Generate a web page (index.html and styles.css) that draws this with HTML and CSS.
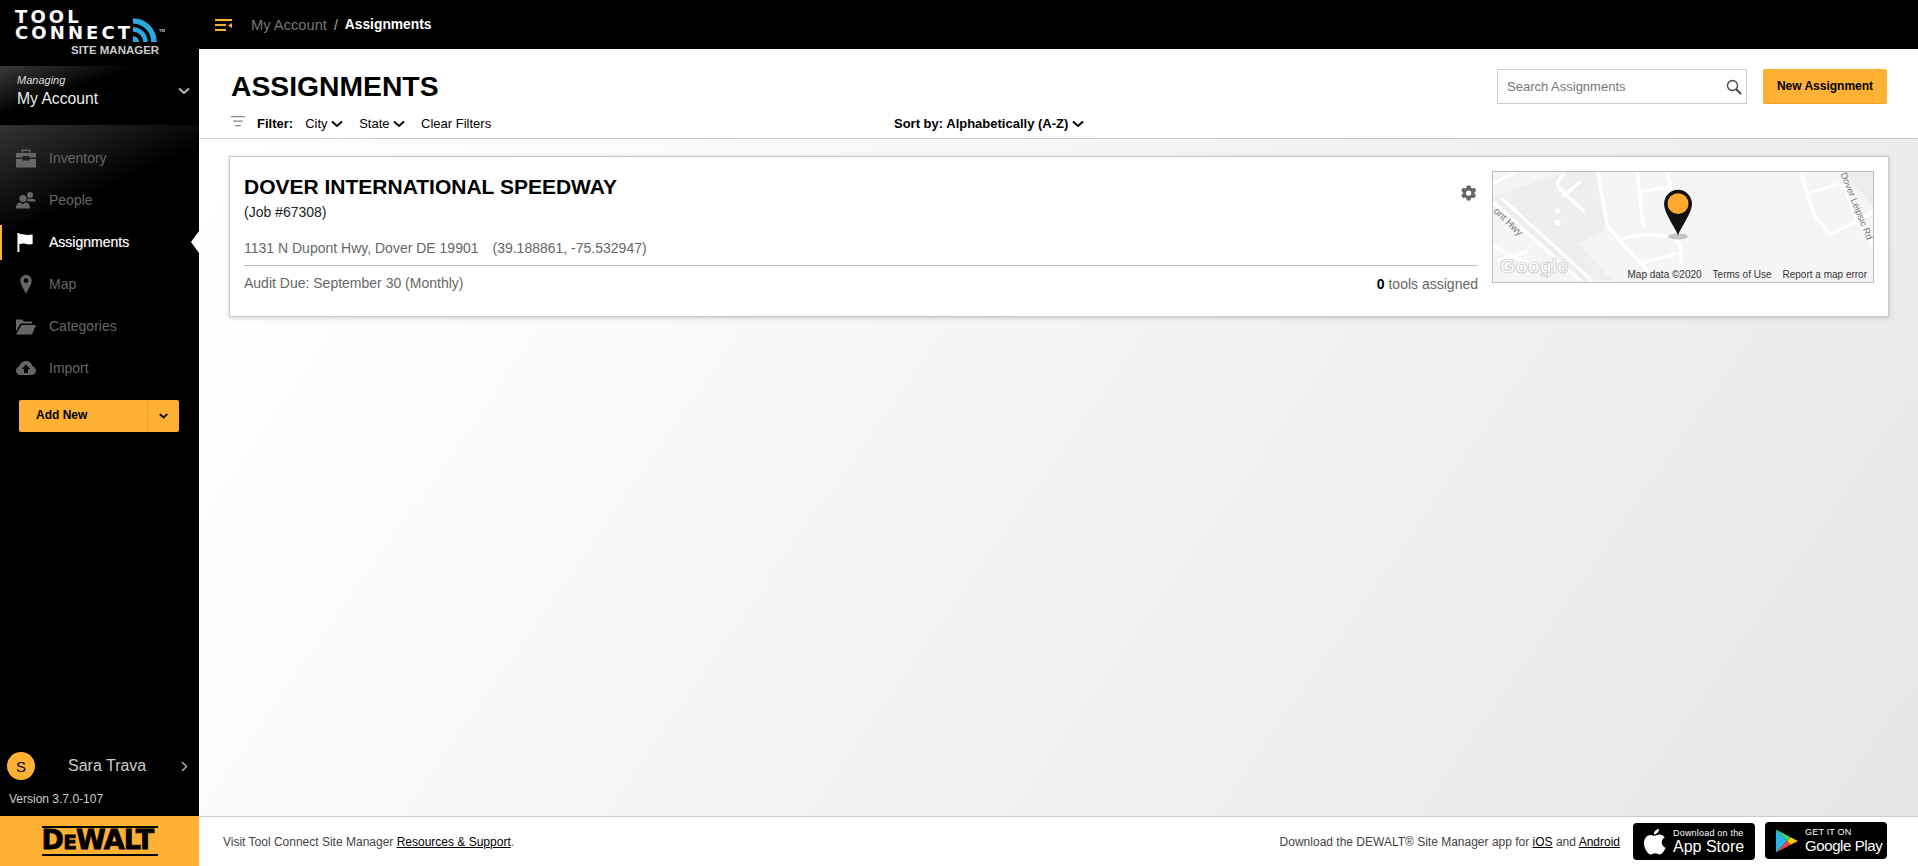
FILE: index.html
```html
<!DOCTYPE html>
<html lang="en">
<head>
    <meta charset="UTF-8"/>
    <title>Assignments</title>
    <link rel="stylesheet" href="styles.css">
</head>
<body>
    <aside class="sidebar">
        <div class="brand">
            <div class="brand-word">TOOL</div>
            <div class="brand-word">CONNECT</div>
            <svg class="brand-wifi" viewBox="0 0 26 24">
                <path d="M0 3A21 21 0 0 1 21 24" fill="none" stroke="#29a9df" stroke-width="5.500"/>
                <path d="M0 11.500A12.500 12.500 0 0 1 12.500 24" fill="none" stroke="#29a9df" stroke-width="4.500"/>
                <path d="M0 24v-6a6 6 0 0 1 6 6z" fill="#29a9df"/>
            </svg>
            <span class="brand-tm">TM</span>
            <div class="brand-sub">SITE MANAGER</div>
        </div>

        <div class="managing">
            <div>
                <em>Managing</em>
                <div class="managing-name">My Account</div>
            </div>
            <svg class="chev" width="12" height="8" viewBox="0 0 12 8"><path d="M1 1.500l5 4.500 5-4.500" fill="none" stroke="#bbb" stroke-width="2"/></svg>
        </div>

        <nav class="nav">
            <a class="nav-item">
                <svg class="nav-icon" viewBox="0 0 20 18"><path d="M5.500 0h9v3H13V1.500H7V3H5.500zM0 3.500h20V8h-6.500V6.500h-7V8H0zM0 9.500h6.500V11h7V9.500H20V18H0z"/></svg>
                Inventory
            </a>
            <a class="nav-item">
                <svg class="nav-icon" viewBox="0 0 20 18"><circle cx="7" cy="7" r="3.600"/><path d="M0 17c0-4 2-6 4-6l3 1.500L10 11c2 0 4 2 4 6z"/><circle cx="14" cy="3.500" r="3"/><path d="M10.500 9c1-1.500 2-2 2.500-2l1 .8 1.500-.8c2 0 4 1 4.500 3h-7z"/></svg>
                People
            </a>
            <a class="nav-item active">
                <svg class="nav-icon" viewBox="0 0 20 20"><path d="M1 0h2v20H1zM3 1.500c3-1 5 .5 8 .5l6-.5v10c-3 1-5 .2-8-.3-2-.3-4 0-6 .6z"/></svg>
                Assignments
            </a>
            <a class="nav-item">
                <svg class="nav-icon" viewBox="0 0 20 20"><path fill-rule="evenodd" d="M10 0c3.500 0 6 2.600 6 6 0 4-4 9-6 14-2-5-6-10-6-14 0-3.400 2.500-6 6-6zm0 3.500a2.500 2.500 0 100 5 2.500 2.500 0 000-5z"/></svg>
                Map
            </a>
            <a class="nav-item">
                <svg class="nav-icon" viewBox="0 0 20 16"><path d="M0 1h6l2 2h8v2H4.500L0 13zM5.500 6.500H20L16 16H0z"/></svg>
                Categories
            </a>
            <a class="nav-item">
                <svg class="nav-icon" viewBox="0 0 20 15"><path fill-rule="evenodd" d="M4.500 14C2 14 0 12.200 0 9.700c0-2 1.300-3.700 3.200-4.200C4 2.400 6.700 0 10 0c3.200 0 5.800 2.200 6.600 5.300 2 .5 3.400 2.300 3.400 4.400 0 2.500-2 4.300-4.500 4.300zM10 3.500L5.500 8H8v4h4V8h2.500z"/></svg>
                Import
            </a>
        </nav>

        <div class="add-new">
            <span class="add-new-label">Add New</span>
            <span class="add-new-arrow">
                <svg width="9" height="6" viewBox="0 0 12 8"><path d="M1 1.500l5 4.500 5-4.500" fill="none" stroke="#000" stroke-width="2.500"/></svg>
            </span>
        </div>

        <div class="side-spacer"></div>

        <div class="user">
            <span class="avatar">S</span>
            <span class="user-name">Sara Trava</span>
            <svg width="7" height="11" viewBox="0 0 7 11"><path d="M1 1l4.500 4.500L1 10" fill="none" stroke="#aaa" stroke-width="1.500"/></svg>
        </div>
        <div class="version">Version 3.7.0-107</div>
    </aside>

    <header class="topbar">
        <svg class="menu-icon" width="17" height="12" viewBox="0 0 17 12"><path d="M0 0h17v2H0zM0 5h11v2H0zM0 10h11v2H0zM17 4v5l-4-2.500z" fill="#ffb133"/></svg>
        <span class="crumb">My Account</span>
        <span class="crumb-sep">/</span>
        <strong class="crumb-current">Assignments</strong>
    </header>

    <main class="main">
        <section class="page-head">
            <div class="page-head-top">
                <h1>ASSIGNMENTS</h1>
                <div class="page-actions">
                    <div class="search">
                        <span>Search Assignments</span>
                        <svg width="16" height="16" viewBox="0 0 16 16"><circle cx="6.500" cy="6.500" r="5" fill="none" stroke="#444" stroke-width="1.300"/><path d="M10 10l5 5" stroke="#444" stroke-width="2"/></svg>
                    </div>
                    <button class="btn-new">New Assignment</button>
                </div>
            </div>
            <div class="filters">
                <div class="filter-left">
                    <svg class="filter-icon" width="14" height="11" viewBox="0 0 14 11"><path d="M0 0h14v1.300H0zM2 4.500h10v1.300H2zM4 9h6v1.300H4z" fill="#888"/></svg>
                    <b>Filter:</b>
                    <span class="filter-opt">City <svg width="12" height="8" viewBox="0 0 12 8"><path d="M1 1.500l5 4.500 5-4.500" fill="none" stroke="#000" stroke-width="2"/></svg></span>
                    <span class="filter-opt">State <svg width="12" height="8" viewBox="0 0 12 8"><path d="M1 1.500l5 4.500 5-4.500" fill="none" stroke="#000" stroke-width="2"/></svg></span>
                    <span class="filter-opt">Clear Filters</span>
                </div>
                <div class="sort">Sort by: Alphabetically (A-Z) <svg width="12" height="8" viewBox="0 0 12 8"><path d="M1 1.500l5 4.500 5-4.500" fill="none" stroke="#000" stroke-width="2"/></svg></div>
            </div>
        </section>

        <article class="card">
            <div class="card-info">
                <div class="card-head">
                    <div>
                        <h2>DOVER INTERNATIONAL SPEEDWAY</h2>
                        <div class="job">(Job #67308)</div>
                    </div>
                    <svg class="gear" width="18" height="18" viewBox="0 0 24 24"><path fill="#666" d="M19.400 13c.1-.3.100-.7.100-1s0-.7-.1-1l2.100-1.600c.2-.2.200-.4.100-.6l-2-3.500c-.1-.2-.4-.3-.6-.2l-2.500 1c-.5-.4-1.100-.7-1.700-1L14 2.400c0-.2-.2-.4-.5-.4h-4c-.2 0-.4.200-.5.400l-.4 2.700c-.6.300-1.200.6-1.700 1l-2.500-1c-.2-.1-.5 0-.6.200l-2 3.500c-.1.200-.1.400.1.600L4 11c0 .3-.1.700-.1 1s0 .7.100 1l-2.100 1.600c-.2.200-.2.400-.1.600l2 3.500c.1.200.4.300.6.200l2.500-1c.5.400 1.100.7 1.700 1l.4 2.700c0 .2.200.4.500.4h4c.2 0 .4-.2.500-.4l.4-2.700c.6-.3 1.200-.6 1.700-1l2.500 1c.2.100.5 0 .6-.2l2-3.500c.1-.2.100-.4-.1-.6zM11.500 15.500a3.500 3.500 0 110-7 3.500 3.500 0 010 7z"/></svg>
                </div>
                <div class="address"><span>1131 N Dupont Hwy, Dover DE 19901</span><span>(39.188861, -75.532947)</span></div>
                <div class="card-foot">
                    <span>Audit Due: September 30 (Monthly)</span>
                    <span class="tools"><b>0</b> tools assigned</span>
                </div>
            </div>
            <div class="map">
                <svg class="map-art" viewBox="0 0 382 111" preserveAspectRatio="none">
                    <rect width="382" height="111" fill="#f5f5f5"/>
                    <path d="M0 25L70 0h36l8 58-28 14 34 38H92L0 28z" fill="#eeeeee"/>
                    <path d="M352 0h30v33z" fill="#ececec"/>
                    <g fill="none" stroke="#fff" stroke-width="3.500">
                        <path d="M0 12L22 0"/>
                        <path d="M0 30l88 80M8 26l92 84" stroke-width="3"/>
                        <path d="M105 0l10 55 45 50M145 0l6 55M175 0l5 20M148 20l30-5"/>
                        <path d="M130 68c15-6 50-8 58 4l3 38M150 92l35-10"/>
                        <path d="M72 2c-10 8-8 12-2 18l22 20M88 10L70 24"/>
                        <path d="M310 0l8 30 6 15 15 18 30-15 13-8M316 22l32-10"/>
                        <path d="M350 0c5 20 10 35 16 50l16 24"/>
                        <path d="M0 75l40 20M5 90l30-10"/>
                    </g>
                    <circle cx="65" cy="39" r="2.500" fill="#fff"/>
                    <circle cx="65" cy="51" r="3" fill="#fff"/>
                    <text class="map-road" x="0" y="40" transform="rotate(44 0 40)">ont Hwy</text>
                    <text class="map-road map-road-small" x="349" y="2" transform="rotate(68 349 2)">Dover Leipsic Rd</text>
                    <text class="map-logo" x="7" y="102">Google</text>
                    <ellipse cx="186" cy="65" rx="10" ry="3" fill="#c4c4c4"/>
                    <path d="M186 64c-2-7-14-22-14-32a14 14 0 0128 0c0 10-12 25-14 32z" fill="#111"/>
                    <circle cx="186" cy="32" r="10.500" fill="#ffa92e"/>
                </svg>
                <div class="map-credits">
                    <span>Map data ©2020</span>
                    <span>Terms of Use</span>
                    <span>Report a map error</span>
                </div>
            </div>
        </article>
    </main>

    <div class="dewalt">
        <div class="dewalt-logo">D<small>E</small>WALT</div>
    </div>

    <footer class="footer">
        <div>Visit Tool Connect Site Manager <a>Resources &amp; Support</a>.</div>
        <div class="footer-right">
            <span class="footer-app">Download the DEWALT® Site Manager app for <a>iOS</a> and <a>Android</a></span>
            <div class="badge">
                <svg width="22" height="26" viewBox="0 0 22 26"><path fill="#fff" d="M15 0c.2 2.800-2.300 5.500-5 5.300C9.700 2.700 12.300.200 15 0zM10.500 6.800c1.200 0 2.600-1.300 5-1.300 1.700 0 3.900.9 5.200 2.900-4.300 2.500-3.600 8.600.9 10.300-1.100 2.700-3.500 6.800-5.900 6.800-1.800 0-2.500-1.200-4.500-1.200s-2.800 1.200-4.400 1.200C3.800 25.500 0 19.500 0 14.300 0 9 3.200 5.900 6.500 5.900c1.600 0 3 .9 4 .9z"/></svg>
                <div class="badge-text">
                    <small>Download on the</small>
                    <span>App Store</span>
                </div>
            </div>
            <div class="badge badge-google">
                <svg width="22" height="26" viewBox="0 0 24 27"><path fill="#27b6e9" d="M0 1v25l12-12.500z"/><path fill="#3fd07a" d="M0 1l16 8.500-4 4z"/><path fill="#f0433f" d="M0 26l16-8.500-4-4z"/><path fill="#fec30b" d="M16 9.500l8 4-8 4-4-4z"/></svg>
                <div class="badge-text">
                    <small>GET IT ON</small>
                    <span class="badge-play">Google Play</span>
                </div>
            </div>
        </div>
    </footer>
</body>
</html>
```

FILE: styles.css
```css
* {
    margin: 0;
    padding: 0;
    box-sizing: border-box;
}
html, body {
    height: 100%;
    width: 100%;
    overflow: hidden;
}
body {
    display: grid;
    grid-template-columns: 199px 1fr;
    grid-template-rows: 49px 1fr 50px;
    font-family: "Liberation Sans", Arial, sans-serif;
    font-size: 14px;
    color: #000;
    background-color: #000;
}

/* sidebar */
.sidebar {
    grid-row: 1 / 3;
    display: flex;
    flex-direction: column;
    background-color: #000;
    color: #fff;
}
.brand {
    position: relative;
    height: 66px;
    padding: 9px 0 0 15px;
    flex-shrink: 0;
}
.brand-word {
    font-family: "DejaVu Sans", sans-serif;
    font-weight: bold;
    font-size: 18px;
    line-height: 16px;
    letter-spacing: 3.100px;
}
.brand-wifi {
    position: absolute;
    left: 133px;
    top: 18px;
    width: 26px;
    height: 24px;
}
.brand-tm {
    position: absolute;
    left: 159px;
    top: 28px;
    font-size: 4px;
    font-weight: bold;
    color: #ccc;
}
.brand-sub {
    position: absolute;
    left: 71px;
    top: 44px;
    font-size: 11.500px;
    font-weight: bold;
    color: #ccc;
}
.managing {
    height: 59px;
    flex-shrink: 0;
    display: flex;
    justify-content: space-between;
    align-items: center;
    padding: 0 9px 10px 17px;
    background: linear-gradient(160deg, #3a3a3a 0, #000 38%);
}
.managing em {
    display: block;
    font-size: 11px;
    color: #ddd;
    margin-bottom: 4px;
}
.managing-name {
    font-size: 15.700px;
    color: #eee;
}
.nav {
    display: flex;
    flex-direction: column;
    padding-top: 12px;
    background: linear-gradient(155deg, #333 0, #000 32%);
}
.nav-item {
    position: relative;
    height: 42px;
    display: flex;
    align-items: center;
    padding-left: 16px;
    color: #666;
    font-size: 14px;
}
.nav-icon {
    width: 20px;
    height: 19px;
    margin-right: 13px;
    fill: #666;
}
.nav-item.active {
    color: #fff;
    -webkit-text-stroke: 0.2px #fff;
}
.nav-item.active .nav-icon {
    fill: #fff;
}
.nav-item.active::before {
    content: "";
    position: absolute;
    left: 0;
    top: 4px;
    width: 2px;
    height: 35px;
    background-color: #ffb133;
}
.nav-item.active::after {
    content: "";
    position: absolute;
    right: 0;
    top: 10px;
    border-top: 11px solid transparent;
    border-bottom: 11px solid transparent;
    border-right: 8px solid #fff;
}
.add-new {
    display: flex;
    height: 32px;
    margin: 11px 20px 0 19px;
    background-color: #ffb133;
    border-radius: 2px;
    color: #000;
    font-size: 12px;
    font-weight: bold;
}
.add-new-label {
    flex: 1;
    display: flex;
    align-items: center;
    padding: 0 0 2px 17px;
}
.add-new-arrow {
    width: 32px;
    display: flex;
    align-items: center;
    justify-content: center;
    border-left: 1px solid #f0a02a;
}
.side-spacer {
    flex: 1;
}
.user {
    display: flex;
    align-items: center;
    padding: 0 11px 0 7px;
}
.avatar {
    width: 28px;
    height: 28px;
    border-radius: 50%;
    background-color: #ffb133;
    color: #000;
    font-size: 15px;
    display: flex;
    align-items: center;
    justify-content: center;
}
.user-name {
    flex: 1;
    padding-left: 33px;
    font-size: 16px;
    color: #ccc;
}
.version {
    padding: 12px 0 10px 9px;
    font-size: 12px;
    color: #ccc;
}

/* top bar */
.topbar {
    display: flex;
    align-items: center;
    padding-left: 16px;
    background-color: #000;
}
.menu-icon {
    margin-right: 19px;
}
.crumb {
    font-size: 14.700px;
    color: #777;
}
.crumb-sep {
    margin: 0 7px;
    color: #aaa;
}
.crumb-current {
    font-size: 13.800px;
    color: #fff;
}

/* main */
.main {
    background: linear-gradient(125deg, #fff 5%, #e6e6e6 100%);
    min-height: 0;
}
.page-head {
    height: 90px;
    padding: 20px 31px 0 32px;
    background-color: #fff;
    border-bottom: 1px solid #ccc;
}
.page-head-top {
    display: flex;
    justify-content: space-between;
    align-items: flex-start;
}
h1 {
    font-size: 28.300px;
    line-height: 34px;
    font-weight: bold;
}
.page-actions {
    display: flex;
    gap: 16px;
}
.search {
    width: 250px;
    height: 35px;
    display: flex;
    justify-content: space-between;
    align-items: center;
    padding: 0 4px 0 9px;
    background-color: #fff;
    border: 1px solid #ccc;
    color: #777;
    font-size: 13px;
}
.btn-new {
    width: 124px;
    height: 35px;
    border: none;
    border-bottom: 1px solid #f0a02a;
    border-radius: 2px;
    background-color: #ffb133;
    font-family: inherit;
    font-size: 12px;
    font-weight: bold;
    color: #000;
}
.filters {
    display: flex;
    align-items: center;
    margin-top: 12px;
    font-size: 13px;
}
.filter-left {
    width: 663px;
    display: flex;
    align-items: center;
}
.filter-icon {
    margin-right: 12px;
    margin-top: -4px;
}
.filter-opt {
    margin-left: 12px;
    margin-right: 4px;
}
.sort {
    font-weight: bold;
}

/* card */
.card {
    display: flex;
    margin: 17px 29px 0 30px;
    height: 161px;
    padding: 14px 14px 0 14px;
    background-color: #fff;
    border: 1px solid #ccc;
    box-shadow: 0 1px 4px rgba(0, 0, 0, 0.2);
}
.card-info {
    flex: 1;
    padding-right: 14px;
    color: #666;
    font-size: 14px;
}
.card-head {
    display: flex;
    justify-content: space-between;
    align-items: center;
}
h2 {
    font-size: 21px;
    line-height: 28px;
    color: #000;
    padding-top: 2px;
}
.job {
    margin-top: 3px;
    color: #222;
    font-size: 14px;
}
.gear {
    margin-top: -6px;
}
.address {
    display: flex;
    gap: 14px;
    margin-top: 20px;
    padding-bottom: 9px;
    border-bottom: 1px solid #bbb;
}
.card-foot {
    display: flex;
    justify-content: space-between;
    padding-top: 9px;
}
.tools {
    margin-top: 1px;
}
.tools b {
    color: #000;
}
.map {
    position: relative;
    width: 382px;
    height: 112px;
    flex-shrink: 0;
    border: 1px solid #bbb;
}
.map-art {
    display: block;
    width: 100%;
    height: 100%;
}
.map-road {
    font-size: 10px;
    fill: #777;
}
.map-road-small {
    font-size: 9.500px;
}
.map-logo {
    font-size: 20px;
    font-weight: bold;
    fill: #fff;
    stroke: #bbb;
    stroke-width: 0.6px;
}
.map-credits {
    position: absolute;
    right: 6px;
    bottom: 2px;
    display: flex;
    gap: 11px;
    font-size: 10px;
    color: #333;
}

/* footer */
.dewalt {
    display: flex;
    align-items: center;
    justify-content: center;
    background-color: #ffb133;
}
.dewalt-logo {
    width: 116px;
    padding: 2px 0;
    border-top: 2px solid #000;
    border-bottom: 2px solid #000;
    font-family: "DejaVu Sans", sans-serif;
    font-weight: bold;
    font-size: 27px;
    line-height: 20px;
    letter-spacing: -0.800px;
    white-space: nowrap;
    color: #000;
    -webkit-text-stroke: 0.8px #000;
}
.dewalt-logo small {
    font-size: 20px;
}
.footer {
    display: flex;
    justify-content: space-between;
    align-items: center;
    padding: 0 31px 0 24px;
    background-color: #fff;
    border-top: 1px solid #ccc;
    font-size: 12px;
    color: #444;
}
.footer a {
    color: #000;
    text-decoration: underline;
}
.footer-right {
    display: flex;
    align-items: center;
    gap: 10px;
}
.footer-app {
    margin-right: 3px;
}
.badge {
    width: 122px;
    height: 37px;
    display: flex;
    align-items: center;
    gap: 7px;
    padding-left: 11px;
    background-color: #000;
    border-radius: 4px;
    color: #fff;
    white-space: nowrap;
}
.badge-google {
    margin-bottom: 2px;
}
.badge-text {
    display: flex;
    flex-direction: column;
    line-height: 1;
}
.badge-text small {
    font-size: 9px;
    letter-spacing: 0.200px;
    margin-bottom: 1px;
}
.badge-text span {
    font-size: 16px;
}
.badge-text .badge-play {
    font-size: 15px;
    letter-spacing: -0.400px;
}
```
